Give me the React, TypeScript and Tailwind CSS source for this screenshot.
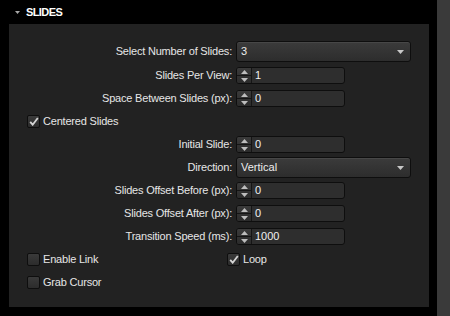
import React from "react";

const font = { fontFamily: '"Liberation Sans", Arial, sans-serif' };

const Caret: React.FC = () => (
  <svg width="7" height="4" viewBox="0 0 7 4" className="shrink-0">
    <path d="M0 0h7L3.5 4z" fill="#c8c8c8" />
  </svg>
);

const Select: React.FC<{ value: string }> = ({ value }) => (
  <div className="flex h-[21px] w-[175px] items-center justify-between rounded-[3px] border border-[#0e0e0e] bg-gradient-to-b from-[#3b3b3b] to-[#2d2d2d] pl-[4px] pr-[6px] text-[11px] text-[#ececec] shadow-[inset_0_1px_0_#474747]">
    <span>{value}</span>
    <Caret />
  </div>
);

const NumberInput: React.FC<{ value: string }> = ({ value }) => (
  <div className="flex h-[17px] w-[109px] overflow-hidden rounded-[3px] border border-[#0e0e0e] bg-[#2e2e2e]">
    <div className="flex w-[15px] flex-col border-r border-[#151515] bg-gradient-to-b from-[#3a3a3a] to-[#2b2b2b]">
      <div className="flex flex-1 items-center justify-center border-b border-[#151515]">
        <svg width="7" height="4" viewBox="0 0 7 4">
          <path d="M0 4h7L3.5 0z" fill="#bdbdbd" />
        </svg>
      </div>
      <div className="flex flex-1 items-center justify-center">
        <svg width="7" height="4" viewBox="0 0 7 4">
          <path d="M0 0h7L3.5 4z" fill="#bdbdbd" />
        </svg>
      </div>
    </div>
    <div className="flex flex-1 items-center pl-[3px] text-[11px] text-[#f0f0f0]">{value}</div>
  </div>
);

const Checkbox: React.FC<{ checked?: boolean; label: string }> = ({ checked, label }) => (
  <div className="flex items-center gap-[3px] text-[11px] text-[#e6e6e6]">
    <div className="flex h-[13px] w-[13px] items-center justify-center rounded-[2px] border border-[#0e0e0e] bg-gradient-to-b from-[#3a3a3a] to-[#2c2c2c]">
      {checked && (
        <svg width="10" height="9" viewBox="0 0 10 9">
          <path d="M1.2 4.8l2.5 2.9L8.8 1" stroke="#d4d4d4" strokeWidth="1.8" fill="none" />
        </svg>
      )}
    </div>
    <span className="tracking-[-0.2px]">{label}</span>
  </div>
);

const Field: React.FC<{ label: string; children: React.ReactNode; tall?: boolean }> = ({ label, children, tall }) => (
  <div className={`flex items-center gap-[4px] ${tall ? "h-[25px]" : "h-[23px]"}`}>
    <div className="w-[205px] text-right text-[11px] tracking-[-0.2px] text-[#e6e6e6]">{label}</div>
    {children}
  </div>
);

const App: React.FC = () => {
  return (
    <div className="flex h-[316px] w-[450px] bg-black" style={font}>
      <div className="flex w-[437px] flex-col">
        <div className="flex h-[24px] items-center gap-[6px] pl-[15px]">
          <svg width="5" height="3" viewBox="0 0 5 3">
            <path d="M0 0h5L2.5 3z" fill="#a8a8a8" />
          </svg>
          <span className="text-[11px] font-bold tracking-[-0.6px] text-white">SLIDES</span>
        </div>
        <div className="ml-[9px] mr-[8px] flex h-[283px] flex-col bg-[#222222] pl-[18px] pt-[15px]">
          <Field label="Select Number of Slides:" tall>
            <Select value="3" />
          </Field>
          <Field label="Slides Per View:">
            <NumberInput value="1" />
          </Field>
          <Field label="Space Between Slides (px):">
            <NumberInput value="0" />
          </Field>
          <div className="flex h-[23px] items-center">
            <Checkbox checked label="Centered Slides" />
          </div>
          <Field label="Initial Slide:">
            <NumberInput value="0" />
          </Field>
          <Field label="Direction:">
            <Select value="Vertical" />
          </Field>
          <Field label="Slides Offset Before (px):">
            <NumberInput value="0" />
          </Field>
          <Field label="Slides Offset After (px):">
            <NumberInput value="0" />
          </Field>
          <Field label="Transition Speed (ms):">
            <NumberInput value="1000" />
          </Field>
          <div className="grid h-[23px] grid-cols-[200px_1fr] items-center">
            <Checkbox label="Enable Link" />
            <Checkbox checked label="Loop" />
          </div>
          <div className="flex h-[23px] items-center">
            <Checkbox label="Grab Cursor" />
          </div>
        </div>
      </div>
      <div className="w-[13px] bg-[#3a3a3a]" />
    </div>
  );
};

export default App;
